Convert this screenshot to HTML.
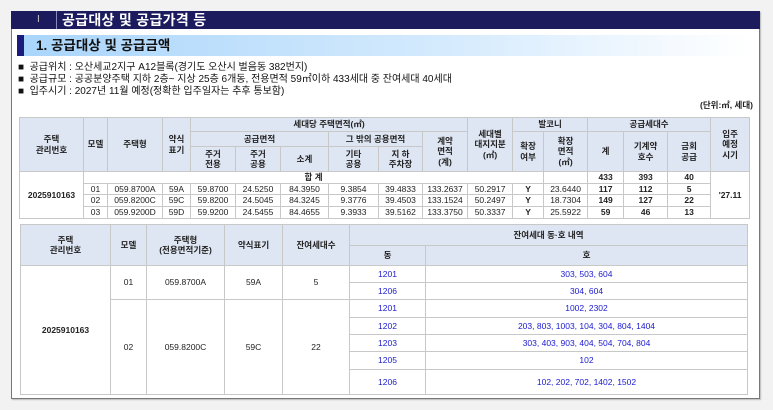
<!DOCTYPE html>
<html><head><meta charset="utf-8"><style>
*{box-sizing:border-box;margin:0;padding:0}
body{width:773px;height:410px;background:#f2f2f2;font-family:"Liberation Sans","Noto Sans CJK KR",sans-serif;position:relative;overflow:hidden;color:#222}
.box{position:absolute;left:11px;top:11px;width:749px;height:388px;background:#fff;border:1px solid #777;border-top:none;box-shadow:1px 1px 1px #bbb}
.title{position:absolute;left:11px;top:11px;width:749px;height:18px;background:#1b1b5e;color:#fff;font-size:14px;font-weight:bold;line-height:18px}
.title .i{position:absolute;left:26px;font-weight:normal;font-size:10px;color:#ccc}
.title .sep{position:absolute;left:45px;top:0;width:1px;height:18px;background:#8888bb}
.title .t{position:absolute;left:51px;letter-spacing:0.3px}
.band{position:absolute;left:17px;top:35px;width:733px;height:21px;background:linear-gradient(90deg,#a9d5fb,#d6ebfd 60%,#fff)}
.band .b{position:absolute;left:0;top:0;width:7px;height:21px;background:#1b1b7e}
.band .t{position:absolute;left:19px;top:1px;font-size:13.5px;font-weight:bold;color:#111;line-height:19px}
.info{position:absolute;left:18px;top:62px;font-size:10px;line-height:12px;color:#111}
.unit{position:absolute;right:20px;top:99px;font-size:8.5px;font-weight:bold}
table{position:absolute;border-collapse:collapse;table-layout:fixed;font-size:8.5px;text-align:center}
td{border:1px solid #c8c8c8;padding:0;line-height:10.5px;overflow:hidden;white-space:nowrap}
.h td{background:#dfe6f3;color:#222}
#t1{left:19px;top:117px;width:730px;border-top:1px solid #999}
#t2{left:20px;top:224px;width:727px;border-top:1px solid #999}
.bl{color:#1a1ad0}
b{font-weight:bold}
</style></head><body>
<div class="box"></div>
<div class="title"><span class="i">I</span><span class="sep"></span><span class="t">공급대상 및 공급가격 등</span></div>
<div class="band"><div class="b"></div><div class="t">1. 공급대상 및 공급금액</div></div>
<div class="info">■&nbsp; 공급위치 : 오산세교2지구 A12블록(경기도 오산시 벌음동 382번지)<br>■&nbsp; 공급규모 : 공공분양주택 지하 2층~ 지상 25층 6개동, 전용면적 59㎡이하 433세대 중 잔여세대 40세대<br>■&nbsp; 입주시기 : 2027년 11월 예정(정확한 입주일자는 추후 통보함)</div>
<div class="unit">(단위:㎡, 세대)</div>
<table id="t1">
<colgroup><col style="width:64px"><col style="width:24px"><col style="width:55px"><col style="width:28px"><col style="width:45px"><col style="width:45px"><col style="width:48px"><col style="width:50px"><col style="width:44px"><col style="width:45px"><col style="width:45px"><col style="width:31px"><col style="width:44px"><col style="width:36px"><col style="width:44px"><col style="width:43px"><col style="width:39px"></colgroup>
<tr class="h" style="height:14px"><td rowspan="3"><b>주택<br>관리번호</b></td><td rowspan="3"><b>모델</b></td><td rowspan="3"><b>주택형</b></td><td rowspan="3"><b>약식<br>표기</b></td><td colspan="6"><b>세대당 주택면적(㎡)</b></td><td rowspan="3"><b>세대별<br>대지지분<br>(㎡)</b></td><td colspan="2"><b>발코니</b></td><td colspan="3"><b>공급세대수</b></td><td rowspan="3"><b>입주<br>예정<br>시기</b></td></tr>
<tr class="h" style="height:15px"><td colspan="3"><b>공급면적</b></td><td colspan="2"><b>그 밖의 공용면적</b></td><td rowspan="2"><b>계약<br>면적<br>(계)</b></td><td rowspan="2"><b>확장<br>여부</b></td><td rowspan="2"><b>확장<br>면적<br>(㎡)</b></td><td rowspan="2"><b>계</b></td><td rowspan="2"><b>기계약<br>호수</b></td><td rowspan="2"><b>금회<br>공급</b></td></tr>
<tr class="h" style="height:25px"><td><b>주거<br>전용</b></td><td><b>주거<br>공용</b></td><td><b>소계</b></td><td><b>기타<br>공용</b></td><td><b>지 하<br>주차장</b></td></tr>
<tr style="height:11px"><td rowspan="4"><b>2025910163</b></td><td colspan="11"><b>합 계</b></td><td></td><td><b>433</b></td><td><b>393</b></td><td><b>40</b></td><td rowspan="4"><b>'27.11</b></td></tr>
<tr style="height:11px"><td>01</td><td>059.8700A</td><td>59A</td><td>59.8700</td><td>24.5250</td><td>84.3950</td><td>9.3854</td><td>39.4833</td><td>133.2637</td><td>50.2917</td><td><b>Y</b></td><td>23.6440</td><td><b>117</b></td><td><b>112</b></td><td><b>5</b></td></tr>
<tr style="height:11px"><td>02</td><td>059.8200C</td><td>59C</td><td>59.8200</td><td>24.5045</td><td>84.3245</td><td>9.3776</td><td>39.4503</td><td>133.1524</td><td>50.2497</td><td><b>Y</b></td><td>18.7304</td><td><b>149</b></td><td><b>127</b></td><td><b>22</b></td></tr>
<tr style="height:12px"><td>03</td><td>059.9200D</td><td>59D</td><td>59.9200</td><td>24.5455</td><td>84.4655</td><td>9.3933</td><td>39.5162</td><td>133.3750</td><td>50.3337</td><td><b>Y</b></td><td>25.5922</td><td><b>59</b></td><td><b>46</b></td><td><b>13</b></td></tr>
</table>
<table id="t2">
<colgroup><col style="width:90px"><col style="width:36px"><col style="width:78px"><col style="width:58px"><col style="width:67px"><col style="width:76px"><col style="width:322px"></colgroup>
<tr class="h" style="height:21px"><td rowspan="2"><b>주택<br>관리번호</b></td><td rowspan="2"><b>모델</b></td><td rowspan="2"><b>주택형<br>(전용면적기준)</b></td><td rowspan="2"><b>약식표기</b></td><td rowspan="2"><b>잔여세대수</b></td><td colspan="2"><b>잔여세대 동·호 내역</b></td></tr>
<tr class="h" style="height:20px"><td><b>동</b></td><td><b>호</b></td></tr>
<tr style="height:17px"><td rowspan="7"><b>2025910163</b></td><td rowspan="2">01</td><td rowspan="2">059.8700A</td><td rowspan="2">59A</td><td rowspan="2">5</td><td class="bl">1201</td><td class="bl">303, 503, 604</td></tr>
<tr style="height:17px"><td class="bl">1206</td><td class="bl">304, 604</td></tr>
<tr style="height:18px"><td rowspan="5">02</td><td rowspan="5">059.8200C</td><td rowspan="5">59C</td><td rowspan="5">22</td><td class="bl">1201</td><td class="bl">1002, 2302</td></tr>
<tr style="height:17px"><td class="bl">1202</td><td class="bl">203, 803, 1003, 104, 304, 804, 1404</td></tr>
<tr style="height:17px"><td class="bl">1203</td><td class="bl">303, 403, 903, 404, 504, 704, 804</td></tr>
<tr style="height:18px"><td class="bl">1205</td><td class="bl">102</td></tr>
<tr style="height:25px"><td class="bl">1206</td><td class="bl">102, 202, 702, 1402, 1502</td></tr>
</table>
</body></html>
